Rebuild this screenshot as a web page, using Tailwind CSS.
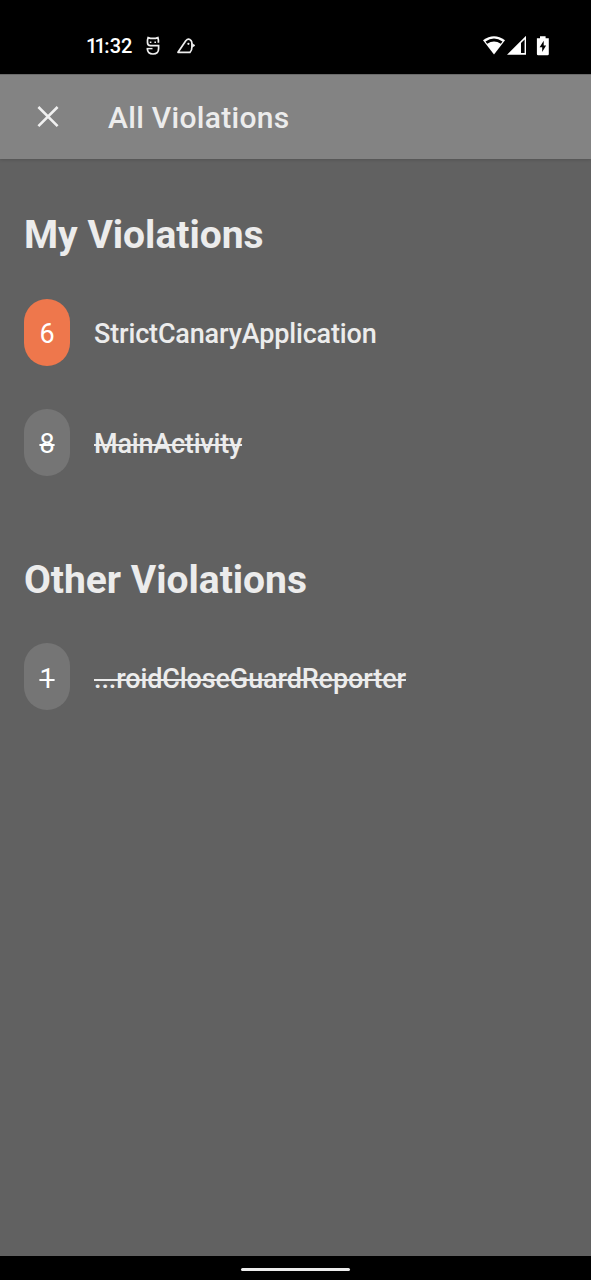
<!DOCTYPE html>
<html lang="en">
<head>
<meta charset="utf-8">
<title>All Violations</title>
<script src="https://cdn.jsdelivr.net/npm/@tailwindcss/browser@4"></script>
</head>
<body class="bg-black">
<div class="flex h-[1280px] w-[591px] flex-col overflow-hidden bg-black font-['Roboto',sans-serif] text-[#ececec]">
  <div class="flex h-[74px] shrink-0 items-center pt-[17px] pl-[87px] pr-[41px] text-white">
    <span class="w-[46px] whitespace-nowrap text-[20px] font-medium leading-6"><span class="-ml-px tracking-[-2.8px]">1</span><span class="tracking-[-1.6px]">1</span><span>:32</span></span>
    <svg class="ml-3 h-5 w-4" viewBox="0 0 16 20" fill="none" stroke="#eee" stroke-width="1.7">
      <path d="M13.4 6.8V4L12.9 1.6L10.6 2.4H5.4L3.1 1.6L2.5 4V6.5Q2.5 9.7 5.5 9.7H13.6V12.5Q13.6 18 8 18Q2.4 18 2.4 12.8"/>
      <path d="M1.6 12.6H7.5" stroke-width="1.4"/>
      <path d="M4.8 6.2H6.4M9.4 6.2H11" stroke-width="1.5"/>
    </svg>
    <svg class="ml-[15px] h-5 w-5" viewBox="0 0 20 20" fill="none" stroke="#eee" stroke-width="1.7" stroke-linejoin="round">
      <path d="M2 16.3L9.8 4.8Q12.6 1.7 15 4.6Q15.9 5.8 15.9 7.5V11Q16 14.5 14 16.3Z"/>
      <path d="M16.3 7.6L19 9.4L16.3 11.2Z" fill="#eee" stroke-width=".6"/>
      <circle cx="12.4" cy="7.8" r="1.1" fill="#eee" stroke="none"/>
    </svg>
    <svg class="ml-auto h-5 w-[67px]" viewBox="0 0 67 20" fill="#fff">
      <path d="M0 4.2Q11 -3.6 22 4.2L11 18.6Z"/>
      <path d="M2.5 5.4Q11 -0.4 19.5 5.4L17.8 7.8Q11 3.2 4.2 7.8Z" fill="#000"/>
      <path d="M24 18.7L43 -0.2V18.7Z"/>
      <path d="M38 7L41.6 3.5V17H38Z" fill="#000"/>
      <path d="M53.9 2.3H57V0.3H62.6V2.3H65.8V18Q65.8 19.2 64.6 19.2H55.1Q53.9 19.2 53.9 18Z"/>
      <path d="M60.7 4.7L56.6 11.3H59.2V16L63.1 9.4H60.7Z" fill="#000"/>
    </svg>
  </div>
  <header class="z-10 flex h-[85px] shrink-0 items-center border-t border-[#6a6a6a] bg-[#838383] pl-[37px] shadow-[0_1px_3px_rgba(0,0,0,0.15)]">
    <svg class="size-[22px]" viewBox="0 0 22 22" fill="none" stroke="#f0f0f0" stroke-width="2.6"><path d="M1.4 1L20.6 20.2M20.6 1L1.4 20.2"/></svg>
    <h1 class="ml-[49px] mt-px text-[30px] font-medium leading-9 tracking-[0.3px]">All Violations</h1>
  </header>
  <main class="flex h-[1097px] shrink-0 flex-col bg-[#616161] px-6 pt-[52px]">
    <h2 class="h-[48px] whitespace-nowrap text-[39px] font-bold leading-[48px] tracking-[-0.03px]">My Violations</h2>
    <div class="mt-10 flex h-[67px] items-center gap-6">
      <span class="flex h-[67px] w-[46px] items-center justify-center rounded-full bg-[#ee774c] pt-[3px] text-[27px] text-white">6</span>
      <span class="pt-[3px] text-[27px] font-medium tracking-[-0.16px]">StrictCanaryApplication</span>
    </div>
    <div class="mt-[43px] flex h-[67px] items-center gap-6">
      <span class="flex h-[67px] w-[46px] items-center justify-center rounded-full bg-[#757575] pt-[3px] text-[27px] text-white line-through decoration-[1.5px]">8</span>
      <span class="pt-[3px] text-[27px] font-medium tracking-[-0.2px] line-through decoration-[1.5px]">MainActivity</span>
    </div>
    <h2 class="mt-[80px] h-[48px] whitespace-nowrap text-[39px] font-bold leading-[48px] tracking-[-0.03px]">Other Violations</h2>
    <div class="mt-[39px] flex h-[67px] items-center gap-6">
      <span class="flex h-[67px] w-[46px] items-center justify-center rounded-full bg-[#757575] pt-[5px] text-[27px] text-white line-through decoration-[1.5px]">1</span>
      <span class="pt-[5px] text-[27px] font-medium tracking-[-0.12px] line-through decoration-[1.5px]">...roidCloseGuardReporter</span>
    </div>
  </main>
  <footer class="flex h-6 shrink-0 items-center justify-center pt-[2px]"><div class="h-[3px] w-[109px] rounded-full bg-[#ececec]"></div></footer>
</div>
</body>
</html>
